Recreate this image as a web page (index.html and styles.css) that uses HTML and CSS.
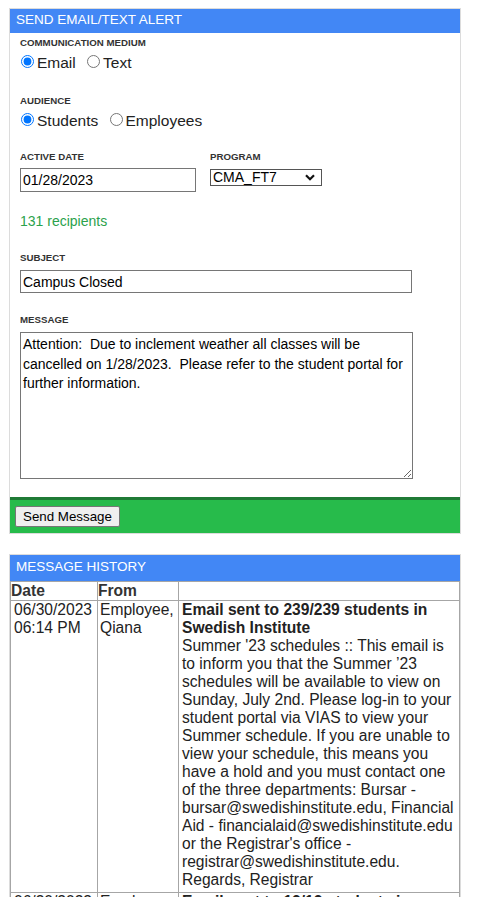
FILE: index.html
```html
<!DOCTYPE html>
<html lang="en">
  <head>
    <meta charset="UTF-8" />
    <meta name="viewport" content="width=device-width, initial-scale=1.0" />
    <title>Send Email/Text Alert</title>
    <link rel="stylesheet" href="styles.css">
  </head>
  <body>
    <div class="panel">
      <div class="panel-head">SEND EMAIL/TEXT ALERT</div>
      <div class="panel-body">
        <div class="field field-medium">
          <div class="label">COMMUNICATION MEDIUM</div>
          <div class="choices">
            <label class="choice"><input type="radio" name="medium" checked>Email</label>
            <label class="choice"><input type="radio" name="medium">Text</label>
          </div>
        </div>

        <div class="field field-audience">
          <div class="label">AUDIENCE</div>
          <div class="choices">
            <label class="choice"><input type="radio" name="audience" checked>Students</label>
            <label class="choice"><input type="radio" name="audience">Employees</label>
          </div>
        </div>

        <div class="field field-row">
          <div class="col-date">
            <div class="label">ACTIVE DATE</div>
            <input type="text" class="text-input date-input" value="01/28/2023" />
          </div>
          <div class="col-program">
            <div class="label">PROGRAM</div>
            <span class="select-wrap">
              <select class="program-select">
                <option>CMA_FT7</option>
              </select>
              <svg class="chevron" width="10" height="7" viewBox="0 0 10 7">
                <path d="M1 1.2 L5 5.2 L9 1.2" fill="none" stroke="#111" stroke-width="2.2" />
              </svg>
            </span>
          </div>
        </div>

        <div class="recipients">131 recipients</div>

        <div class="field field-subject">
          <div class="label">SUBJECT</div>
          <input type="text" class="text-input subject-input" value="Campus Closed" />
        </div>

        <div class="field field-message">
          <div class="label">MESSAGE</div>
          <textarea class="message-input">Attention:  Due to inclement weather all classes will be cancelled on 1/28/2023.  Please refer to the student portal for further information.</textarea>
        </div>
      </div>
      <div class="panel-foot">
        <button id="sendMessage">Send Message</button>
      </div>
    </div>

    <div class="panel history">
      <div class="panel-head history-head">MESSAGE HISTORY</div>
      <table class="history-table">
        <colgroup>
          <col class="c-date" />
          <col class="c-from" />
          <col />
        </colgroup>
        <thead>
          <tr>
            <th>Date</th>
            <th>From</th>
            <th></th>
          </tr>
        </thead>
        <tbody>
          <tr>
            <td>06/30/2023 06:14 PM</td>
            <td>Employee, Qiana</td>
            <td>
              <b>Email sent to 239/239 students in Swedish Institute</b><br />
              Summer '23 schedules :: This email is to inform you that the Summer ’23 schedules will be available to view on Sunday, July 2nd. Please log-in to your student portal via VIAS to view your Summer schedule. If you are unable to view your schedule, this means you have a hold and you must contact one of the three departments: Bursar - bursar@swedishinstitute.edu, Financial Aid - financialaid@swedishinstitute.edu or the Registrar's office - registrar@swedishinstitute.edu. Regards, Registrar
            </td>
          </tr>
          <tr>
            <td>06/30/2023 06:12 PM</td>
            <td>Employee, Qiana</td>
            <td>
              <b>Email sent to 12/12 students in Swedish Institute</b><br />
              Summer '23 schedules :: This email is to inform you that the Summer ’23 schedules will be available to view on Sunday, July 2nd.
            </td>
          </tr>
        </tbody>
      </table>
    </div>
  </body>
</html>
```

FILE: styles.css
```css
body {
  font-family: "Liberation Sans", Arial, sans-serif;
  color: #222;
  margin: 0;
  padding: 8px 0 0 9px;
}

.panel {
  width: 450px;
  border: 1px solid #dcdcdc;
  background-color: #fff;
}

.panel-head {
  background-color: #4287f5;
  color: #fff;
  font-size: 13.5px;
  line-height: 16px;
  padding: 3px 6px 5px;
}

.panel-body {
  padding: 4px 10px 18px;
}

.label {
  font-size: 9.7px;
  font-weight: bold;
  line-height: 12px;
  color: #333;
  margin-bottom: 5px;
}

.choices {
  font-size: 15.5px;
  line-height: 18px;
}

.choice {
  margin-right: 6px;
}

.choice input {
  margin: 0 3px 0 1px;
}

.field-medium {
  margin-bottom: 23px;
}

.field-audience {
  margin-bottom: 21px;
}

.field-row {
  display: flex;
  margin-bottom: 21px;
}

.col-date {
  width: 190px;
}

.text-input {
  font-family: "Liberation Sans", Arial, sans-serif;
  font-size: 14px;
  color: #000;
  border: 1px solid #767676;
  border-radius: 0;
  padding: 0 2px;
  box-sizing: border-box;
  display: block;
  margin: 0;
}

.date-input {
  width: 176px;
  height: 24px;
}

.select-wrap {
  position: relative;
  display: inline-block;
}

.program-select {
  -webkit-appearance: none;
  appearance: none;
  font-family: "Liberation Sans", Arial, sans-serif;
  font-size: 14px;
  line-height: 15px;
  color: #000;
  width: 112px;
  height: 17px;
  padding: 0 2px;
  margin: 0;
  border: 1px solid #555;
  border-radius: 0;
  background-color: #fff;
  display: block;
}

.chevron {
  position: absolute;
  right: 7px;
  top: 5px;
}

.recipients {
  color: #2ba24c;
  font-size: 14px;
  line-height: 16px;
  margin-bottom: 23px;
}

.field-subject {
  margin-bottom: 21px;
}

.field-subject .label {
  margin-bottom: 6px;
}

.subject-input {
  width: 392px;
  height: 23px;
}

.field-message .label {
  margin-bottom: 6px;
}

.message-input {
  font-family: "Liberation Sans", Arial, sans-serif;
  font-size: 14px;
  line-height: 19.5px;
  color: #000;
  width: 393px;
  height: 147px;
  box-sizing: border-box;
  border: 1px solid #767676;
  border-radius: 0;
  padding: 2px 2px;
  margin: 0;
  display: block;
}

.panel-foot {
  background-color: #27bb4b;
  border-top: 3px solid #1f7a35;
  padding: 6px 5px;
}

#sendMessage {
  font-family: "Liberation Sans", Arial, sans-serif;
  font-size: 13.333px;
  line-height: 15px;
  color: #000;
  background-color: #efefef;
  border: 1px solid #767676;
  border-radius: 2px;
  padding: 2px 7px;
  height: 21px;
  display: block;
}

.history {
  margin-top: 20px;
}

.history-head {
  padding: 4px 6px 6px;
}

.history-table {
  width: 450px;
  table-layout: fixed;
  border-collapse: collapse;
  font-size: 15.6px;
  line-height: 18px;
  color: #222;
}

.c-date {
  width: 87px;
}

.c-from {
  width: 81px;
}

.history-table th,
.history-table td {
  border: 1px solid #a6a6a6;
  vertical-align: top;
  text-align: left;
}

.history-table th {
  color: #333;
  padding: 0;
}

.history-table td {
  padding: 0 2px 3px 3px;
}

.history-table td:nth-child(2) {
  padding-left: 2px;
}
```
